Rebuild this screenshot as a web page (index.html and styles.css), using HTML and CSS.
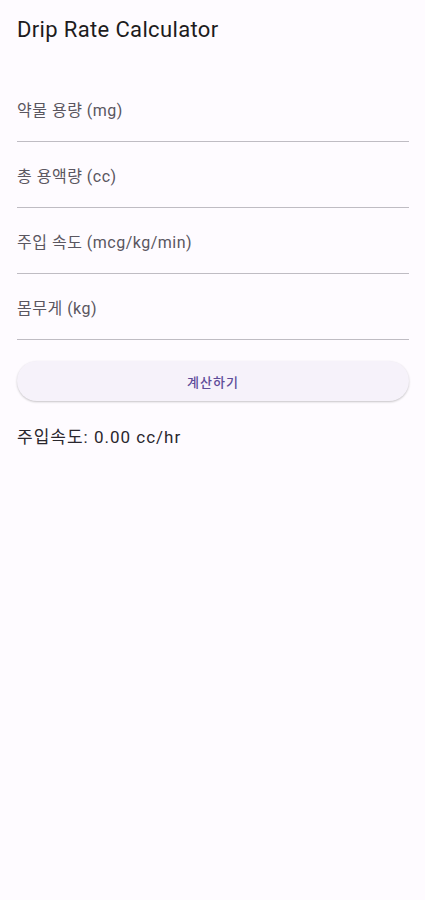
FILE: index.html
```html
<!DOCTYPE html>
<html lang="ko">
<head>
  <meta charset="UTF-8">
  <title>Drip Rate Calculator</title>
  <link rel="stylesheet" href="styles.css">
</head>
<body>
  <div class="app-bar">
    <div class="app-title">Drip Rate Calculator</div>
  </div>

  <div class="content">
    <div class="field"><span class="field-label">약물 용량 (mg)</span></div>
    <div class="field"><span class="field-label">총 용액량 (cc)</span></div>
    <div class="field"><span class="field-label">주입 속도 (mcg/kg/min)</span></div>
    <div class="field"><span class="field-label">몸무게 (kg)</span></div>

    <button class="calc-btn">계산하기</button>

    <div class="result">주입속도: 0.00 cc/hr</div>
  </div>
</body>
</html>
```

FILE: styles.css
```css
body {
  margin: 0;
  padding: 0;
  background-color: #fefbff;
  color: #1d1b20;
  font-family: Roboto, "Noto Sans CJK KR", sans-serif;
  min-height: 900px;
}

.app-bar {
  height: 60px;
  display: flex;
  align-items: center;
  padding: 0 17px;
}

.app-title {
  font-size: 22px;
  line-height: 28px;
  letter-spacing: 0.35px;
}

.content {
  padding: 16px 16px 0 17px;
}

.field {
  height: 65px;
  display: flex;
  align-items: center;
  border-bottom: 1.5px solid #bfbcc3;
}

.field-label {
  font-size: 16px;
  letter-spacing: 0.5px;
  color: #5a5660;
}

.calc-btn {
  display: block;
  width: 100%;
  height: 40px;
  margin-top: 21px;
  border: none;
  border-radius: 20px;
  background-color: #f6f2fa;
  box-shadow: 0 1px 2px rgba(0, 0, 0, 0.16), 0 1px 3px rgba(0, 0, 0, 0.07);
  color: #5e4c99;
  font-family: Roboto, "Noto Sans CJK KR", sans-serif;
  font-size: 13px;
  font-weight: 500;
  letter-spacing: 1px;
}

.result {
  margin-top: 24px;
  font-size: 17px;
  line-height: 24px;
  letter-spacing: 1px;
  color: #2a272e;
}
```
